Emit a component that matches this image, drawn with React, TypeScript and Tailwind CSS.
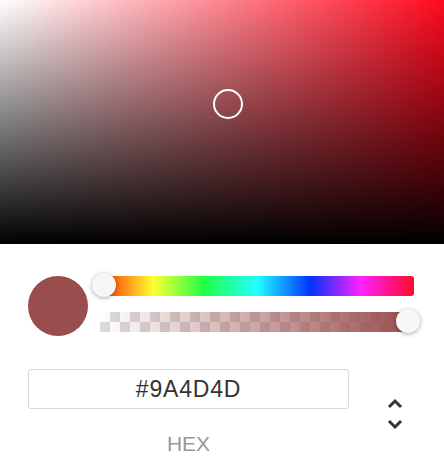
import React from 'react'

const HEX = '#9A4D4D'

function Thumb({ className }: { className: string }) {
  return (
    <div
      className={`absolute w-6 h-6 rounded-full bg-[#f7f7f7] shadow-[0_1px_4px_rgba(0,0,0,0.35)] ${className}`}
    />
  )
}

export default function App() {
  return (
    <div className="w-[444px] h-[476px] bg-white overflow-hidden font-['Liberation_Sans',Arial,sans-serif]">
      {/* Saturation / value area */}
      <div className="relative h-[244px] bg-[#ff0a1e]">
        <div className="absolute inset-0 bg-[linear-gradient(to_right,#ffffff,rgba(255,255,255,0))]" />
        <div className="absolute inset-0 bg-[linear-gradient(to_top,#000000,rgba(0,0,0,0))]" />
        <div className="absolute left-[213px] top-[89px] w-[30px] h-[30px] rounded-full border-[2.5px] border-white" />
      </div>

      <div className="pl-[28px] pr-[30px] pt-[32px]">
        {/* Swatch + sliders */}
        <div className="flex items-start gap-3">
          <div className="w-[60px] h-[60px] rounded-full shrink-0" style={{ backgroundColor: HEX }} />
          <div className="flex-1 flex flex-col gap-4">
            <div className="relative h-5 rounded-r-[3px] bg-[linear-gradient(to_right,#ff2a00_0%,#ff3_17%,#2f4_33%,#2ff_50%,#03f_67%,#f2f_83%,#ff0a28_100%)]">
              <Thumb className="left-[-8px] top-[-3px]" />
            </div>
            <div className="relative h-5">
              <div className="absolute inset-0 bg-[repeating-conic-gradient(#dcdcdc_0_25%,#ffffff_0_50%)] bg-[length:20px_20px]" />
              <div className="absolute inset-0 bg-[linear-gradient(to_right,rgba(154,77,77,0),rgba(154,77,77,1))]" />
              <Thumb className="right-[-6px] top-[-3px]" />
            </div>
          </div>
        </div>

        {/* Hex input */}
        <div className="flex items-start mt-[33px]">
          <div className="w-[321px] flex flex-col items-center">
            <div className="w-full h-[40px] border-[1.5px] border-[#d9d9d9] rounded-[3px] flex items-center justify-center text-[23px] tracking-[0.8px] text-[#333333]">
              {HEX}
            </div>
            <div className="mt-[24px] text-[21px] leading-none text-[#999999]">HEX</div>
          </div>
          <div className="ml-[38px] mt-[29px] flex flex-col items-center gap-[10px]">
            <svg width="16" height="11" viewBox="0 0 16 11">
              <path d="M2 9 L8 3 L14 9" fill="none" stroke="#333" strokeWidth="3" />
            </svg>
            <svg width="16" height="11" viewBox="0 0 16 11">
              <path d="M2 2 L8 8 L14 2" fill="none" stroke="#333" strokeWidth="3" />
            </svg>
          </div>
        </div>
      </div>
    </div>
  )
}
